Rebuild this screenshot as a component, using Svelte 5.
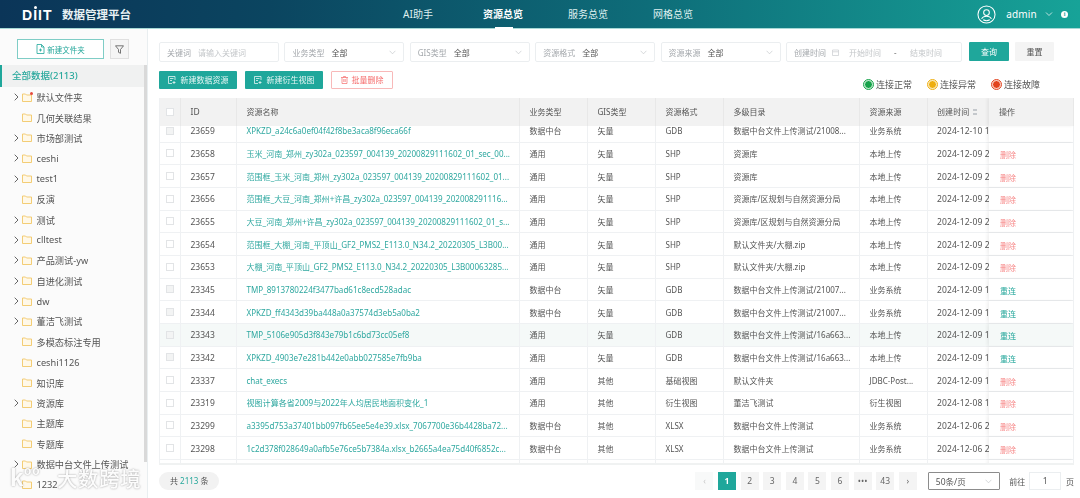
<script>
  const tree = [
    ['默认文件夹', 1, 1], ['几何关联结果', 0], ['市场部测试', 1], ['ceshi', 1], ['test1', 1], ['反演', 0], ['测试', 1], ['clltest', 1],
    ['产品测试-yw', 1], ['自进化测试', 1], ['dw', 1], ['董洁飞测试', 1], ['多模态标注专用', 0], ['ceshi1126', 0], ['知识库', 0],
    ['资源库', 1], ['主题库', 0], ['专题库', 0], ['数据中台文件上传测试', 1], ['1232', 0]
  ];
  const filters = [
    ['业务类型', '全部'], ['GIS类型', '全部'], ['资源格式', '全部'], ['资源来源', '全部']
  ];
  const heads = ['ID', '资源名称', '业务类型', 'GIS类型', '资源格式', '多级目录', '资源来源'];
  const rows = [
    ['23659', 'XPKZD_a24c6a0ef04f42f8be3aca8f96eca66f', '数据中台', '矢量', 'GDB', '数据中台文件上传测试/21008...', '业务系统', '2024-12-10 16', '', 1],
    ['23658', '玉米_河南_郑州_zy302a_023597_004139_20200829111602_01_sec_00...', '通用', '矢量', 'SHP', '资源库', '本地上传', '2024-12-09 20', '删除'],
    ['23657', '范围框_玉米_河南_郑州_zy302a_023597_004139_20200829111602_01...', '通用', '矢量', 'SHP', '资源库', '本地上传', '2024-12-09 20', '删除'],
    ['23656', '范围框_大豆_河南_郑州+许昌_zy302a_023597_004139_202008291116...', '通用', '矢量', 'SHP', '资源库/区规划与自然资源分局', '本地上传', '2024-12-09 20', '删除'],
    ['23655', '大豆_河南_郑州+许昌_zy302a_023597_004139_20200829111602_01_s...', '通用', '矢量', 'SHP', '资源库/区规划与自然资源分局', '本地上传', '2024-12-09 20', '删除'],
    ['23654', '范围框_大棚_河南_平顶山_GF2_PMS2_E113.0_N34.2_20220305_L3B00...', '通用', '矢量', 'SHP', '默认文件夹/大棚.zip', '本地上传', '2024-12-09 20', '删除'],
    ['23653', '大棚_河南_平顶山_GF2_PMS2_E113.0_N34.2_20220305_L3B00063285...', '通用', '矢量', 'SHP', '默认文件夹/大棚.zip', '本地上传', '2024-12-09 20', '删除'],
    ['23345', 'TMP_8913780224f3477bad61c8ecd528adac', '数据中台', '矢量', 'GDB', '数据中台文件上传测试/21007...', '业务系统', '2024-12-09 17', '重连', 1],
    ['23344', 'XPKZD_ff4343d39ba448a0a37574d3eb5a0ba2', '数据中台', '矢量', 'GDB', '数据中台文件上传测试/21007...', '业务系统', '2024-12-09 17', '重连', 1],
    ['23343', 'TMP_5106e905d3f843e79b1c6bd73cc05ef8', '通用', '矢量', 'GDB', '数据中台文件上传测试/16a663...', '本地上传', '2024-12-09 17', '重连', 1],
    ['23342', 'XPKZD_4903e7e281b442e0abb027585e7fb9ba', '通用', '矢量', 'GDB', '数据中台文件上传测试/16a663...', '本地上传', '2024-12-09 17', '重连', 1],
    ['23337', 'chat_execs', '通用', '其他', '基础视图', '默认文件夹', 'JDBC-Post...', '2024-12-09 15', '删除'],
    ['23319', '视图计算各省2009与2022年人均居民地面积变化_1', '通用', '其他', '衍生视图', '董洁飞测试', '衍生视图', '2024-12-08 14', '删除'],
    ['23299', 'a3395d753a37401bb097fb65ee5e4e39.xlsx_7067700e36b4428ba72...', '数据中台', '其他', 'XLSX', '数据中台文件上传测试', '业务系统', '2024-12-06 20', '删除'],
    ['23298', '1c2d378f028649a0afb5e76ce5b7384a.xlsx_b2665a4ea75d40f6852c...', '数据中台', '其他', 'XLSX', '数据中台文件上传测试', '业务系统', '2024-12-06 20', '删除'],
    ['', '', '', '', '', '', '', '', '']
  ];
  const pages = ['1', '2', '3', '4', '5', '6', '•••', '43'];
</script>

<div class="app">
  <header class="top">
    <div class="brand">
      <span class="logo">D<span class="ii">I<i></i></span>IT</span>
      <span class="title">数据管理平台</span>
    </div>
    <nav class="nav">
      <span>AI助手</span>
      <span class="on">资源总览</span>
      <span>服务总览</span>
      <span>网格总览</span>
    </nav>
    <div class="user">
      <svg width="19" height="19" viewBox="0 0 20 20" fill="none" stroke="#fff" stroke-width="1.1">
        <circle cx="10" cy="10" r="9" />
        <circle cx="10" cy="8" r="3" />
        <path d="M4.800 14.600c1-2 3-2.800 5.200-2.800s4.200.8 5.200 2.800" />
        <path d="M6.500 15.600c2 1 5 1 7 0" />
      </svg>
      <span class="name">admin</span>
      <svg class="caret" width="8" height="8" viewBox="0 0 8 8" fill="none" stroke="#cfe9e6" stroke-width="0.9"><path d="M1 2.500 4 5.500 7 2.500" /></svg>
      <span class="info">i</span>
    </div>
  </header>

  <div class="body">
    <aside class="side">
      <div class="side-tools">
        <button class="new-folder">
          <svg width="9" height="10" viewBox="0 0 9 10" fill="none" stroke="#1fa79b" stroke-width="0.8"><path d="M1 .5h4.500L8 3v6.500H1zM5.500 .5V3H8M4.500 4.500v3M3 6h3" /></svg>
          新建文件夹
        </button>
        <button class="funnel" aria-label="筛选">
          <svg width="9" height="9" viewBox="0 0 9 9" fill="none" stroke="#555" stroke-width="0.8"><path d="M.5 .8h8L5.500 4.500V8.300L3.500 7.300V4.500z" /></svg>
        </button>
      </div>
      <div class="tree-wrap">
        <div class="all">全部数据(2113)</div>
        <ul class="tree">
          {#each tree as t}
            <li>
              <span class="arrow">
                {#if t[1]}
                  <svg width="5" height="8" viewBox="0 0 5 8" fill="none" stroke="#555" stroke-width="0.9"><path d="M.7 .7 4 4 .7 7.300" /></svg>
                {/if}
              </span>
              <span class="folder">
                <svg width="10" height="9" viewBox="0 0 10 9" fill="#fff8e8" stroke="#f2c766" stroke-width="0.9"><path d="M.5 1h3l1 1h5v6.500h-9z" /></svg>
                {#if t[2]}<i class="dot"></i>{/if}
              </span>
              <span>{t[0]}</span>
            </li>
          {/each}
        </ul>
      </div>
      <div class="rail"></div>
    </aside>

    <main class="main">
      <div class="filters">
        <div class="field kw"><span class="lab">关键词</span><span class="ph">请输入关键词</span></div>
        {#each filters as f}
          <div class="field sel">
            <span class="lab">{f[0]}</span><span class="val">{f[1]}</span>
            <svg class="down" width="7" height="5" viewBox="0 0 7 5" fill="none" stroke="#c4c8cc" stroke-width="0.7"><path d="M.6 .8 3.500 3.800 6.400 .8" /></svg>
          </div>
        {/each}
        <div class="field date">
          <span class="lab">创建时间</span>
          <svg width="7" height="7" viewBox="0 0 7 7" fill="none" stroke="#c8ccd0" stroke-width="0.7"><path d="M.5 1h6v5.500h-6zM.5 2.800h6" /></svg>
          <span class="ph d1">开始时间</span><span class="dash">-</span><span class="ph d2">结束时间</span>
        </div>
        <button class="query">查询</button>
        <button class="reset">重置</button>
      </div>

      <div class="actions">
        <button class="act">
          <svg width="8" height="8" viewBox="0 0 8 8" fill="none" stroke="#fff" stroke-width="0.7"><path d="M7 4V.5H.5v7H4M2 2.500h3.500M2 4.500h2M6 5v3M4.500 6.500h3" /></svg>
          新建数据资源
        </button>
        <button class="act">
          <svg width="8" height="8" viewBox="0 0 8 8" fill="none" stroke="#fff" stroke-width="0.7"><path d="M7 4V.5H.5v7H4M2 2.500h3.500M2 4.500h2M6 5v3M4.500 6.500h3" /></svg>
          新建衍生视图
        </button>
        <button class="del">
          <svg width="7" height="8" viewBox="0 0 7 8" fill="none" stroke="#f56c6c" stroke-width="0.7"><path d="M0 1.500h7M2.500 1.500V.5h2v1M1 1.500v6h5v-6M2.800 3v3M4.200 3v3" /></svg>
          批量删除
        </button>
        <div class="legend">
          <span><i class="lg g"></i>连接正常</span>
          <span><i class="lg y"></i>连接异常</span>
          <span><i class="lg r"></i>连接故障</span>
        </div>
      </div>

      <div class="table">
        <div class="row head">
          <div class="c ck"><i class="box"></i></div>
          {#each heads as h, i}
            <div class="c c{i}">{h}</div>
          {/each}
          <div class="c c7">创建时间 <span class="sort"></span></div>
          <div class="c op">操作</div>
        </div>
        <div class="rows">
          <div class="scroller">
            {#each rows as r}
              <div class="row" class:hover={r[0] === '23343'}>
                <div class="c ck">{#if r[0]}<i class="box" class:dis={r[9]}></i>{/if}</div>
                <div class="c c0">{r[0]}</div>
                <div class="c c1 link">{r[1]}</div>
                <div class="c c2">{r[2]}</div>
                <div class="c c3">{r[3]}</div>
                <div class="c c4">{r[4]}</div>
                <div class="c c5">{r[5]}</div>
                <div class="c c6">{r[6]}</div>
                <div class="c c7">{r[7]}</div>
                <div class="c op"><span class:red={r[8] === '删除'} class:teal={r[8] === '重连'}>{r[8]}</span></div>
              </div>
            {/each}
          </div>
        </div>
      </div>

      <div class="foot">
        <div class="total">共 <b>2113</b> 条</div>
        <div class="pager">
          <span class="pg off">‹</span>
          {#each pages as p, i}
            <span class="pg" class:cur={i === 0}>{p}</span>
          {/each}
          <span class="pg">›</span>
        </div>
        <div class="size">
          <span>50条/页</span>
          <svg width="7" height="5" viewBox="0 0 7 5" fill="none" stroke="#c4c8cc" stroke-width="0.7"><path d="M.6 .8 3.500 3.800 6.400 .8" /></svg>
        </div>
        <span class="goto">前往</span>
        <span class="jump">1</span>
        <span class="goto">页</span>
      </div>
    </main>
  </div>

  <div class="wm" aria-hidden="true">
    <span class="wm-k">k</span><span class="wm-o">oo</span><span class="wm-t">大数跨境</span>
  </div>
</div>

<style>
  :global(body) {
    margin: 0;
    background: #fff;
  }
  * {
    box-sizing: border-box;
  }
  .app {
    position: relative;
    width: 1080px;
    height: 498px;
    overflow: hidden;
    font-family: "Noto Sans", "Noto Sans CJK SC", sans-serif;
    font-size: 9px;
    color: #555;
    display: flex;
    flex-direction: column;
    filter: blur(0.3px);
  }
  button {
    font: inherit;
    border: 0;
    padding: 0;
    cursor: pointer;
  }
  .top {
    height: 29px;
    flex: none;
    display: flex;
    align-items: center;
    color: #fff;
    background: linear-gradient(90deg, #0b3558 0%, #0b4560 25%, #0e6d79 60%, #17a398 100%);
    border-bottom: 1px solid #a7d9d6;
    position: relative;
  }
  .brand {
    display: flex;
    align-items: center;
    width: 397px;
    padding-left: 22px;
  }
  .logo {
    font-family: "Liberation Sans", sans-serif;
    font-weight: 700;
    font-size: 14px;
    letter-spacing: 1px;
    width: 40px;
    padding-top: 1px;
  }
  .ii {
    position: relative;
    display: inline-block;
  }
  .ii i {
    position: absolute;
    left: 0.5px;
    top: -1px;
    width: 3px;
    height: 3px;
    border-radius: 50%;
    background: #fff;
  }
  .title {
    font-size: 11.500px;
    font-weight: 700;
    color: #e8f1f4;
  }
  .nav {
    display: flex;
    gap: 43px;
    font-size: 10px;
    height: 28px;
    align-items: center;
    padding-bottom: 2px;
  }
  .nav span {
    position: relative;
    width: 42px;
    text-align: center;
    white-space: nowrap;
    color: #dff0f0;
  }
  .nav span.on {
    font-weight: 700;
    color: #fff;
  }
  .nav span.on::after {
    content: "";
    position: absolute;
    left: 13px;
    right: 11px;
    bottom: -8px;
    height: 2px;
    background: #fff;
  }
  .user {
    margin-left: auto;
    display: flex;
    align-items: center;
    padding-right: 12px;
  }
  .name {
    font-size: 10px;
    margin: 0 8px 0 10px;
    letter-spacing: 0.2px;
  }
  .caret {
    margin-right: 8px;
  }
  .info {
    width: 7px;
    height: 7px;
    border-radius: 50%;
    background: #fff;
    color: #17a398;
    font: 700 6px/7px "Liberation Serif", serif;
    text-align: center;
  }

  .body {
    flex: 1;
    display: flex;
    min-height: 0;
  }
  .side {
    position: relative;
    width: 148px;
    flex: none;
    background: #fbfbfb;
    border-right: 1px solid #e9eef0;
    overflow: hidden;
  }
  .side-tools {
    display: flex;
    gap: 6px;
    padding: 10px 0 0 17px;
    height: 36px;
  }
  .new-folder {
    width: 87px;
    height: 20px;
    background: #fff;
    border: 1px solid #7fcdc6;
    color: #27a89c;
    font-size: 7.500px;
    display: flex;
    align-items: center;
    justify-content: center;
    gap: 2px;
  }
  .funnel {
    width: 19px;
    height: 20px;
    background: #f5f5f5;
    border: 1px solid #e0e0e0;
    display: flex;
    align-items: center;
    justify-content: center;
  }
  .tree-wrap {
    width: 144px;
  }
  .all {
    height: 22px;
    background: #f0f1f1;
    border-left: 2px solid #1fa79b;
    color: #27a89c;
    font-size: 9.500px;
    font-weight: 500;
    line-height: 22px;
    padding-left: 10px;
  }
  .tree {
    list-style: none;
    margin: 0;
    padding: 0;
  }
  .tree li {
    display: flex;
    align-items: center;
    height: 20.400px;
    font-size: 9.200px;
    color: #555;
    white-space: nowrap;
  }
  .arrow {
    width: 22px;
    padding-left: 14px;
    display: flex;
    align-items: center;
    flex: none;
  }
  .folder {
    position: relative;
    width: 14.500px;
    display: flex;
    flex: none;
  }
  .dot {
    position: absolute;
    left: 8px;
    top: -1px;
    width: 3px;
    height: 3px;
    border-radius: 50%;
    background: #e5483c;
  }
  .rail {
    position: absolute;
    left: 144px;
    top: 36px;
    width: 3px;
    height: 397px;
    background: #d9d9d9;
  }

  .main {
    flex: 1;
    min-width: 0;
    padding: 13px 6px 0 11px;
  }
  .filters {
    display: flex;
    align-items: flex-start;
    height: 20px;
  }
  .field {
    height: 20px;
    border: 1px solid #ebeef0;
    border-radius: 2px;
    display: flex;
    align-items: center;
    padding-left: 7px;
    font-size: 8px;
    position: relative;
    margin-right: 5.400px;
    white-space: nowrap;
  }
  .kw { width: 120px; }
  .sel { width: 120px; }
  .date { width: 176px; margin-right: 7px; }
  .lab { color: #a4a8ac; margin-right: 7px; }
  .ph { color: #c4c7ca; }
  .val { color: #555; }
  .down { position: absolute; right: 7px; top: 7px; }
  .date svg { margin-right: 10px; margin-left: -1px; }
  .d1 { width: 45px; }
  .dash { width: 16px; color: #777; }
  .d2 { width: 42px; }
  .query {
    width: 40px;
    height: 19px;
    background: #1fa79b;
    color: #fff;
    font-size: 8px;
    border-radius: 1px;
    margin-right: 6px;
  }
  .reset {
    width: 39px;
    height: 19px;
    background: #f4f4f4;
    color: #555;
    font-size: 8px;
    border-radius: 1px;
  }
  .actions {
    display: flex;
    align-items: center;
    margin-top: 8px;
    height: 19px;
    gap: 8px;
  }
  .act {
    height: 18px;
    width: 78px;
    background: #1fa79b;
    color: #e6f6f4;
    font-size: 8px;
    display: flex;
    align-items: center;
    justify-content: center;
    gap: 5px;
    border-radius: 1px;
  }
  .del {
    height: 18px;
    width: 62px;
    background: #fff;
    border: 1px solid #f8b9b9;
    color: #f56c6c;
    font-size: 8px;
    display: flex;
    align-items: center;
    justify-content: center;
    gap: 4px;
    border-radius: 1px;
  }
  .legend {
    margin-left: auto;
    margin-right: 34px;
    display: flex;
    gap: 16px;
    font-size: 9px;
    color: #555;
    padding-top: 10px;
  }
  .legend span {
    display: flex;
    align-items: center;
    gap: 3px;
  }
  .lg {
    width: 9px;
    height: 9px;
    border-radius: 50%;
    border: 1.500px solid;
  }
  .lg.g { background: #16a34a; border-color: #c9efd5; outline: 0.5px solid #16a34a; }
  .lg.y { background: #eeae10; border-color: #fbeec6; outline: 0.5px solid #eeae10; }
  .lg.r { background: #e2431e; border-color: #fbd7cd; outline: 0.5px solid #e2431e; }

  .table {
    position: relative;
    margin-top: 9px;
    width: 915px;
    height: 367px;
    overflow: hidden;
    border-bottom: 2px solid #f0f2f2;
  }
  .row {
    display: flex;
    height: 22.670px;
    border-bottom: 1px solid #eff1f3;
    font-size: 8px;
    position: relative;
    background: #fff;
  }
  .row.hover { background: #f5f9f8; }
  .row.hover .op { background: #f5f9f8; }
  .head {
    height: 28px;
    background: #f2f2f2;
    color: #555;
    border-bottom: 0;
    position: relative;
    z-index: 2;
  }
  .rows {
    height: 339px;
    overflow: hidden;
  }
  .scroller {
    margin-top: -6px;
  }
  .c {
    display: flex;
    align-items: center;
    padding-left: 9.500px;
    white-space: nowrap;
    overflow: hidden;
    border-right: 1px solid #eff1f3;
    flex: none;
  }
  .head .c {
    border-right-color: #e8e8e8;
    padding-bottom: 1px;
  }
  .ck { width: 22px; padding-left: 6px; border-left: 1px solid #eff1f3; }
  .c0 { width: 56px; font-size: 8.500px; }
  .c1 { width: 283px; }
  .c2, .c3, .c4 { width: 68px; }
  .c5 { width: 136px; }
  .c6 { width: 68px; }
  .c7 { width: 61px; padding-left: 9px; font-size: 8.500px; letter-spacing: 0.1px; border-right: 0; }
  .head .c7 { font-size: 8px; }
  .op {
    position: absolute;
    left: 830px;
    top: 0;
    bottom: 0;
    width: 85px;
    background: #fff;
    box-shadow: -2px 0 3px rgba(0, 0, 0, 0.06);
    border-right: 1px solid #eff1f3;
    z-index: 1;
    padding-left: 10px;
  }
  .head .op { background: #f2f2f2; }
  .link { color: #2fa8a0; font-size: 8.050px; }
  .red { color: #f78989; font-size: 8px; padding: 2px 0 0 1px; }
  .teal { color: #27a89c; font-size: 8px; padding: 2px 0 0 1px; }
  .box {
    width: 8px;
    height: 8px;
    background: #fff;
    border: 1px solid #e2e4e6;
  }
  .box.dis { background: #f3f4f4; }
  .sort {
    display: inline-block;
    width: 4px;
    height: 6px;
    margin-left: 4px;
    background: linear-gradient(#c4c8cc 40%, transparent 40% 60%, #c4c8cc 60%);
  }

  .foot {
    display: flex;
    align-items: center;
    margin-top: 7px;
    height: 18px;
  }
  .total {
    width: 61px;
    height: 18px;
    border-radius: 9px;
    background: #f2f2f2;
    text-align: center;
    line-height: 18px;
    font-size: 8px;
    color: #555;
  }
  .total b { font-weight: 400; color: #27a89c; }
  .pager {
    margin-left: 476px;
    display: flex;
    gap: 4.600px;
  }
  .pg {
    width: 18px;
    height: 18px;
    background: #f4f4f4;
    text-align: center;
    line-height: 18px;
    font-size: 8.500px;
    color: #666;
  }
  .pg.off { color: #c8c8c8; background: #f8f9f9; }
  .pg.cur { background: #1fa79b; color: #fff; font-weight: 700; }
  .size {
    margin-left: 11px;
    width: 73px;
    height: 18px;
    border: 1px solid #8c8c8c;
    border-radius: 1px;
    display: flex;
    align-items: center;
    justify-content: space-between;
    padding: 0 7px;
    font-size: 8.500px;
    color: #555;
  }
  .goto {
    font-size: 8px;
    margin-left: 9px;
    color: #555;
    white-space: nowrap;
  }
  .jump {
    width: 32px;
    height: 18px;
    margin-left: 4px;
    margin-right: -4px;
    border: 1px solid #ebeef0;
    text-align: center;
    line-height: 16px;
    font-size: 8.500px;
  }

  .wm {
    position: absolute;
    left: 10px;
    top: 463px;
    height: 30px;
    display: flex;
    align-items: center;
    color: rgba(255, 255, 255, 0.96);
    text-shadow: 0 0 2px rgba(100, 100, 100, 0.65);
    font-family: "Noto Sans CJK SC", sans-serif;
    pointer-events: none;
  }
  .wm-k { font: 700 24px/1 "Liberation Sans", sans-serif; width: 14px; }
  .wm-o { font: 700 12px/1 "Liberation Sans", sans-serif; width: 20px; margin-top: -14px; letter-spacing: 1px; }
  .wm-t { font-size: 20.500px; font-weight: 500; letter-spacing: 0.6px; margin-left: 13px; }
</style>
